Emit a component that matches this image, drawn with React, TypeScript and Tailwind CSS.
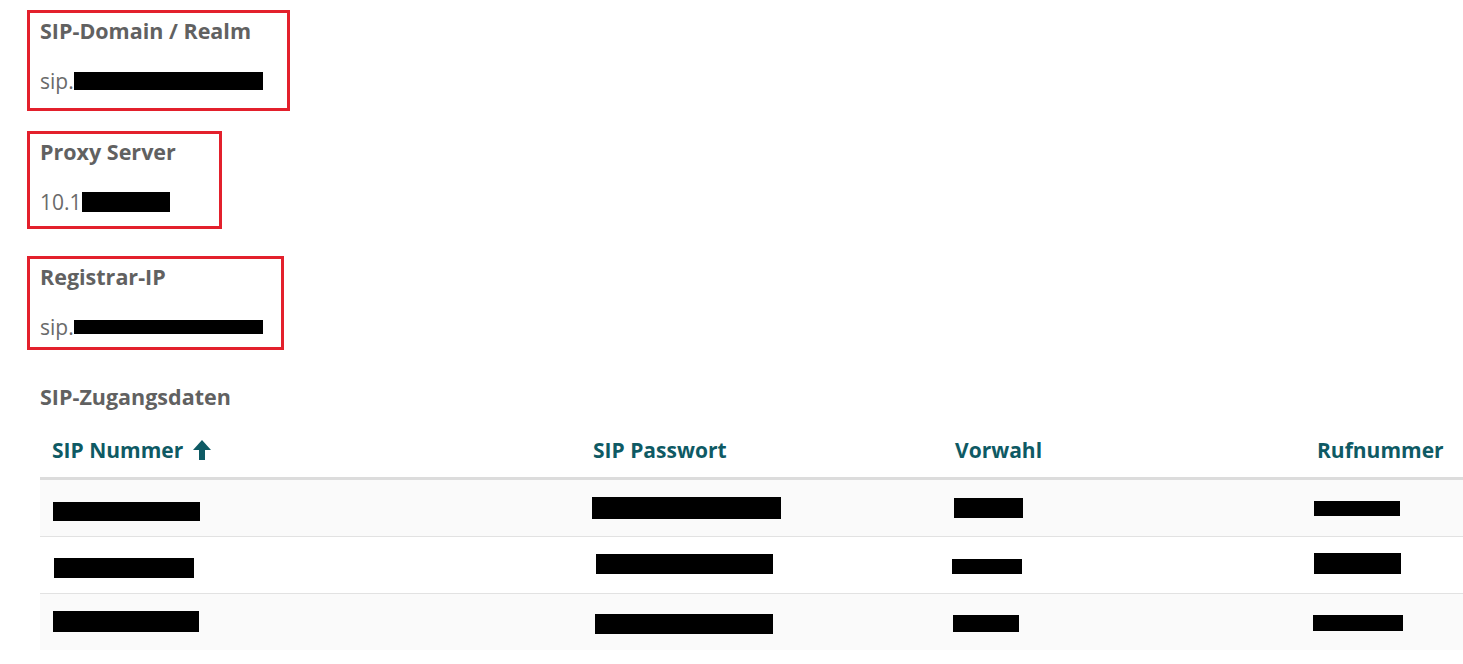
import React from 'react';

type Box = { title: string; prefix: string; w: number; h: number; block: [number, number]; top: string };

// redacted value boxes: block = [width, height]
const boxes: Box[] = [
  { title: 'SIP-Domain / Realm', prefix: 'sip.', w: 263, h: 101, block: [189, 18], top: 'mt-[10px]' },
  { title: 'Proxy Server', prefix: '10.1', w: 195, h: 98, block: [88, 20], top: 'mt-[20px]' },
  { title: 'Registrar-IP', prefix: 'sip.', w: 257, h: 94, block: [189, 14], top: 'mt-[27px]' },
];

// [offsetTop, width, height, offsetLeft] per cell
const rows: [number, number, number, number][][] = [
  [[22, 147, 19, 0], [17, 189, 22, 0], [18, 69, 20, 0], [21, 86, 15, 0]],
  [[21, 140, 20, 1], [17, 177, 20, 4], [22, 70, 15, -2], [16, 87, 21, 0]],
  [[17, 146, 21, 0], [20, 178, 20, 3], [21, 66, 17, -1], [21, 90, 16, -1]],
];

const cols = ['SIP Nummer', 'SIP Passwort', 'Vorwahl', 'Rufnummer'];
const cellPad = ['pl-[13px]', 'pl-[11px]', 'pl-[11px]', 'pl-[9px]'];
const headPad = ['pl-[12px]', 'pl-[12px]', 'pl-[12px]', 'pl-[12px]'];

function ArrowUp() {
  return (
    <svg width="20" height="22" viewBox="0 0 20 22" className="ml-[9px] -mt-[2px]">
      <path d="M10 1 L19 11 L13 11 L13 21 L7 21 L7 11 L1 11 Z" fill="#0e5a64" />
    </svg>
  );
}

export default function App() {
  return (
    <div className="min-h-screen bg-white font-['Open_Sans','Noto_Sans',sans-serif] overflow-hidden">
      <div className="pl-[27px]">
        {boxes.map((b) => (
          <div
            key={b.title}
            className={`${b.top} box-border border-[3px] border-[#e3202c] pl-[10px] pt-[4px]`}
            style={{ width: b.w, height: b.h }}
          >
            <div className="text-[21.5px] leading-[28px] font-bold text-[#616161]">{b.title}</div>
            <div className="mt-[22px] text-[21px] leading-[28px] text-[#6a6a6a] flex items-center whitespace-nowrap">
              <span>{b.prefix}</span>
              <span className="inline-block bg-black shrink-0" style={{ width: b.block[0], height: b.block[1] }} />
            </div>
          </div>
        ))}
      </div>

      <div className="pl-[40px] mt-[33px]">
        <div className="text-[21.5px] leading-[28px] font-bold text-[#616161]">SIP-Zugangsdaten</div>

        <div className="mt-[13px] grid grid-cols-[541px_362px_362px_1fr] h-[56px] items-center border-b-[3px] border-[#dcdcdc]">
          {cols.map((c, i) => (
            <div key={c} className={`${headPad[i]} flex items-center text-[21px] font-bold text-[#0e5a64]`}>
              {c}
              {i === 0 && <ArrowUp />}
            </div>
          ))}
        </div>

        {rows.map((r, ri) => (
          <div
            key={ri}
            className={`grid grid-cols-[541px_362px_362px_1fr] ${ri === 2 ? 'h-[56px]' : 'h-[57px] border-b border-[#e2e2e2]'} ${ri % 2 === 0 ? 'bg-[#fafafa]' : 'bg-white'}`}
          >
            {r.map((cell, ci) => (
              <div key={ci} className={cellPad[ci]}>
                <div className="bg-black" style={{ marginTop: cell[0], width: cell[1], height: cell[2], marginLeft: cell[3] }} />
              </div>
            ))}
          </div>
        ))}
      </div>
    </div>
  );
}
